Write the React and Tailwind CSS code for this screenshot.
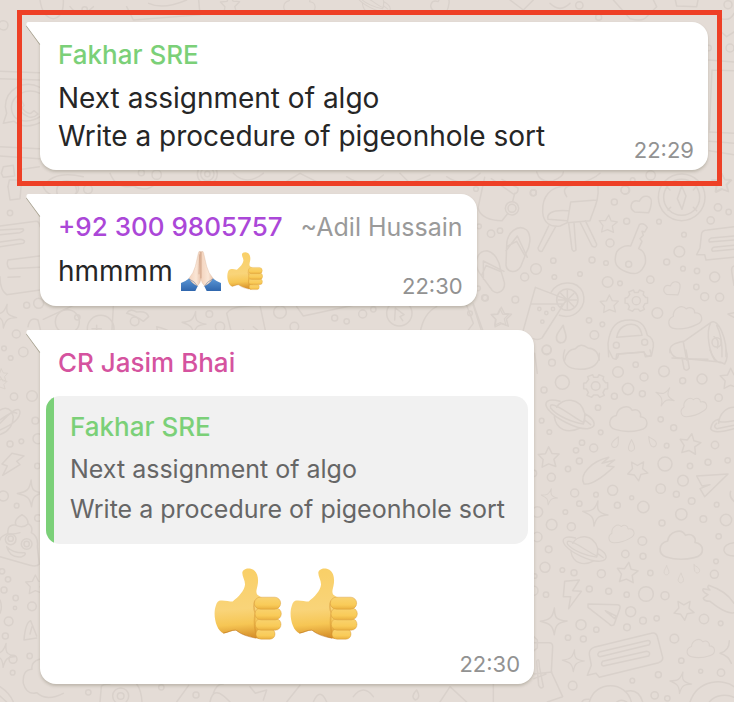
const T = 1 / 3;

const STAR = "M0 -32L10 -12L32 -10L16 6L22 28L0 20L-20 30L-17 7L-32 -9L-10 -11Z";
const SPARK = "M0 -40C2 -12 6 -4 40 -3C12 4 6 10 4 40C-2 14 -8 8 -40 2C-12 -4 -4 -10 0 -40Z";
const CLOUD = "M-44 34C-68 26 -66 -4 -40 -10C-36 -36 -2 -48 10 -26C28 -34 40 -18 36 -6C62 -4 66 30 34 36C10 42 -20 42 -44 34Z";
const HEART = "M22 26L-20 24C-40 10 -30 -16 -6 -8C4 -32 34 -26 30 -2Q28 14 22 26Z";
const DROP = "M0 -24C-10 -4 -18 6 -12 18C-6 28 10 26 12 12C14 0 4 -10 0 -24Z";
const GEAR =
  "M-9 -34L-6 -26L6 -26L10 -34L24 -28L22 -19L30 -10L36 -10L36 8L27 10L22 20L26 28L12 34L6 27L-6 27L-12 34L-26 28L-22 19L-28 9L-36 8L-36 -8L-28 -10L-21 -20L-24 -28Z M-13 0a13 13 0 1 0 26 0a13 13 0 1 0 -26 0";
const PLANET =
  "M-40 -24C-24 -54 30 -56 44 -6L44 18 M-47 4C-42 44 -6 56 30 38 M-30 -42C-70 -54 -80 -38 -66 -18C-44 10 20 42 52 40C82 38 78 14 46 -4 M-54 -32C-30 -30 10 8 42 22 M46 -4L40 26C10 22 -40 2 -58 -22Q-60 -32 -54 -32 M44 14L62 28";
const BOLT = "M0 -38L44 -42L24 -10L50 -8L12 44L18 8L-4 8Z";
const PLANE = "M-50 -30L44 -36L-26 32L-40 8L-10 -4L-34 0Z";
const MESSAGE =
  "M-110 8Q-112 -8 -96 -14L76 -56Q90 -60 94 -46L110 16Q112 26 98 32L-80 76L-90 64L-116 70L-104 40Z M-78 14L70 -22Q78 -36 62 -34L-80 0Q-90 10 -78 14 M-68 42L68 12Q76 0 62 -2L-70 28Q-78 38 -68 42";
const FLIPFLOP =
  "M-34 -6C-34 -44 0 -72 26 -52C42 -34 36 -2 24 18L8 58C-4 78 -32 78 -36 54Z M-36 10L-2 -34L28 30 M-34 -2L-4 -18L20 24";
const COMET = "M-44 40C-60 10 -20 -28 30 -40L10 -22L48 -32L24 -14L46 -12C26 6 -14 44 -44 40Z";

function Doodle({ d, x, y, r = 0, s = 1 }) {
  return <path d={d} transform={`translate(${x} ${y}) rotate(${r}) scale(${s})`} />;
}

function Dots({ list }) {
  return list.map(([x, y, r], i) => <circle key={i} cx={x} cy={y} r={r} />);
}

function Wallpaper() {
  return (
    <svg
      aria-hidden="true"
      className="pointer-events-none absolute left-0 top-0"
      width="734"
      height="702"
      viewBox="0 0 734 702"
      fill="none"
      stroke="#d9d1cb"
      strokeWidth="4.5"
      strokeLinejoin="round"
      strokeLinecap="round"
    >
      <g transform={`translate(470 180) scale(${T})`}>
        <Dots list={[[18,27,7],[190,38,9],[126,85,20],[126,85,12],[465,30,12],[433,66,9],[470,124,9],[567,125,7],[420,189,12],[476,253,9],[366,240,9],[408,249,7],[250,242,8],[198,267,16],[164,291,12],[253,291,7],[330,282,7],[413,306,16],[450,310,7],[541,299,11],[590,246,9],[628,215,16],[642,164,7],[722,121,11],[744,82,11],[776,96,8],[639,266,7],[681,273,8],[734,291,15],[679,321,8],[704,350,12],[749,352,12],[562,399,16],[357,421,8],[397,433,7],[373,465,13],[136,359,10],[44,353,9],[24,325,7],[63,161,11],[90,152,8],[27,139,7],[230,509,13],[0,400,7],[635,52,70],[635,52,54],[439,496,9],[524,487,9],[208,387,5],[249,387,5],[229,399,5],[217,425,5],[292,359,32],[740,487,14]]} />
        <path d="M635 18L648 48L636 88L622 56Z M590 20L600 30M680 18L670 30M594 90L602 82M680 92L670 82" />
        <path d="M44 -8L24 84C30 110 60 122 96 122L112 102 M64 -4L130 42Q146 40 144 24L96 -2 M134 40L128 64" />
        <path d="M290 18C240 18 216 50 218 96C220 128 240 142 270 138L292 128L360 122C372 84 388 60 384 20 M292 128L302 66L380 60 M294 92C240 88 230 104 234 118L292 122 M236 138L204 204Q206 216 216 214L258 138 M296 130L306 208Q310 218 318 210L312 128 M330 126L366 198Q380 206 380 192L346 122" />
        <path d="M482 198L508 134Q520 126 532 142L524 156L516 154L520 166L510 176L516 184L506 206Q530 216 526 250C514 282 496 286 470 276C436 264 430 246 440 216Q456 194 482 198Z" />
        <path d="M160 450L196 322L290 358L216 474Q204 482 190 476 M182 372L282 372 M244 336C262 304 318 296 338 336C354 380 314 420 268 406 M292 330V388M264 360H320M272 340L312 380M312 340L272 380" />
        <path d="M416 530L414 490C420 440 440 418 484 420C516 422 526 440 532 466Q552 474 550 500L544 528L526 530L522 516L440 522L438 538 M440 472C446 440 470 430 494 434Q512 440 516 466Z" />
        <path d="M600 518C596 496 612 490 642 484L722 428 M606 534L644 536L714 538 M640 486L650 540 M722 428C744 410 772 480 768 530 M722 428C706 460 720 520 734 540 M740 436Q758 470 756 530 M732 470Q750 480 742 504" />
        <path d="M792 140L712 150Q694 150 694 166L690 204L680 224L704 224L708 240L792 232 M792 168L724 174Q714 178 718 186L792 180 M792 196L730 202Q722 208 728 214L792 208 M792 258Q782 260 786 280L792 316 M774 402L792 398M776 404L792 412" />
        <path d="M284 540Q290 508 316 506Q332 486 354 504Q384 506 388 540 M10 372L38 450" />
        <Doodle d={STAR} x="414" y="132" s="0.85" r="5" />
        <Doodle d={STAR} x="418" y="372" s="0.85" />
        <Doodle d={STAR} x="94" y="412" s="0.95" />
        <Doodle d={STAR} x="756" y="10" s="0.9" />
        <Doodle d={HEART} x="514" y="72" s="1" />
        <Doodle d={HEART} x="606" y="324" s="0.8" />
        <Doodle d={GEAR} x="499" y="362" s="0.94" />
        <Doodle d={CLOUD} x="645" y="410" s="0.85" r="-12" />
        <Doodle d={DROP} x="276" y="462" s="1.1" r="8" />
        <Doodle d={FLIPFLOP} x="144" y="202" />
        <Doodle d={FLIPFLOP} x="62" y="268" s="0.98" r="-38" />
      </g>

      <g transform={`translate(530 350) scale(${T})`}>
        <Dots list={[[66,38,10],[97,97,21],[42,120,9],[264,66,16],[317,44,8],[342,81,12],[294,117,17],[253,139,9],[337,131,9],[204,173,8],[402,64,16],[458,92,9],[516,87,15],[566,143,11],[431,233,9],[392,208,8],[35,212,7],[58,246,7],[212,247,7],[156,278,8],[191,294,12],[138,301,8],[148,333,9],[114,357,8],[64,382,12],[134,429,12],[248,421,15],[198,434,7],[148,461,8],[106,486,7],[65,524,16],[124,530,12],[22,486,16],[262,466,9],[305,443,6],[340,471,17],[405,342,21],[480,348,8],[534,337,9],[593,331,8],[555,285,11],[410,287,7],[459,392,16],[392,416,14],[439,433,9],[485,453,10],[560,464,7],[454,493,17],[520,507,10],[588,510,17],[396,519,9],[10,370,10],[50,0,14]]} />
        <path d="M104 0C92 34 108 58 150 58C190 58 210 40 208 10 M236 0L248 24Q262 34 266 12L342 6Q350 26 364 14L360 0 M420 0Q428 24 446 24L570 36L584 42Q596 22 588 0 M456 24L462 56Q470 66 478 54L468 0 M540 0Q556 40 574 38" />
        <Doodle d={GEAR} x="197" y="108" />
        <Doodle d={PLANET} x="120" y="196" />
        <Doodle d={CLOUD} x="297" y="206" s="0.95" />
        <Doodle d={CLOUD} x="490" y="168" s="0.68" r="-20" />
        <Doodle d={SPARK} x="405" y="140" s="0.75" r="28" />
        <Doodle d={STAR} x="56" y="322" s="0.98" />
        <Doodle d={STAR} x="480" y="282" s="0.98" r="10" />
        <Doodle d={STAR} x="324" y="360" s="0.92" r="35" />
        <Doodle d={STAR} x="602" y="86" s="0.98" />
        <Doodle d={DROP} x="258" y="276" s="0.72" r="25" />
        <Doodle d={DROP} x="305" y="286" s="0.72" />
        <Doodle d={DROP} x="366" y="274" s="0.72" r="-35" />
        <Doodle d={COMET} x="206" y="362" />
        <Doodle d={SPARK} x="58" y="440" s="0.62" r="14" />
        <Doodle d={PLANE} x="550" y="408" />
        <path d="M612 172C590 172 568 190 566 220 M612 212Q560 222 566 208Q546 212 542 236Q550 254 612 236 M612 226L560 236Q548 230 560 220 M602 424Q596 440 612 454 M10 250V260M14 10L22 70" />
      </g>

      <g transform={`translate(530 520) scale(${T})`}>
        <Dots list={[[337,63,13],[286,102,11],[339,109,9],[22,51,14],[56,88,10],[45,142,15],[97,150,7],[132,158,9],[214,161,12],[178,207,9],[236,214,9],[290,224,8],[348,222,22],[361,159,8],[405,227,12],[302,275,15],[339,302,10],[380,295,8],[291,322,10],[153,314,15],[199,329,8],[114,353,8],[160,357,9],[48,224,8],[10,212,14],[553,163,12],[558,124,7],[566,49,8],[522,297,14],[572,310,7],[433,356,13],[454,422,8],[512,454,6],[573,458,11],[385,464,9],[307,482,7],[128,497,13],[374,526,11],[412,535,8],[14,168,7]]} />
        <Doodle d={PLANET} x="164" y="90" s="0.88" r="-2" />
        <Doodle d={SPARK} x="196" y="-20" s="0.95" r="12" />
        <Doodle d={CLOUD} x="273" y="38" s="0.66" r="-18" />
        <Doodle d={CLOUD} x="456" y="74" s="1.08" />
        <Doodle d={CLOUD} x="513" y="384" s="0.7" r="-5" />
        <Doodle d={STAR} x="292" y="158" s="0.98" r="8" />
        <Doodle d={STAR} x="463" y="268" s="0.92" r="36" />
        <Doodle d={DROP} x="410" y="151" s="0.56" />
        <Doodle d={DROP} x="453" y="174" s="0.6" />
        <Doodle d={DROP} x="499" y="146" s="0.56" r="-30" />
        <Doodle d={BOLT} x="104" y="222" />
        <Doodle d={SPARK} x="71" y="304" r="3" />
        <Doodle d={SPARK} x="130" y="422" s="0.82" r="6" />
        <Doodle d={SPARK} x="452" y="488" s="0.82" r="12" />
        <path d="M174 252L264 254Q274 256 268 270L252 314Q244 320 238 312L174 262Z M226 272L258 288L254 296L228 274" />
        <Doodle d={MESSAGE} x="288" y="396" />
        <path d="M612 250Q590 214 536 196Q530 202 540 210L520 206Q514 214 534 224L520 234Q522 244 540 244Q590 284 612 278 M612 68Q580 72 582 92Q586 108 612 108 M598 362Q598 392 570 400Q596 408 604 430" />
        <path d="M12 368H58Q68 368 68 380L64 456L98 530L52 546 M12 350L22 360V384L12 392 M66 456L12 462 M20 424Q28 410 28 440L40 500Q34 510 26 496Z M12 476L48 462" />
        <path d="M178 546C196 480 288 482 304 546 M288 514Q326 504 338 546 M156 546Q160 536 176 538 M260 546Q274 536 290 546 M480 546C504 476 584 476 612 500 M538 546C556 522 592 522 612 532" />
      </g>

      <g transform={`scale(${T})`}>
        <Dots list={[[10,76,14],[424,518,9],[470,524,14],[622,522,30],[622,522,20],[622,522,8],[200,572,30],[254,28,8]]} />
        <path d="M0 214L118 218 M0 236L118 240 M0 440L118 446 M0 468L118 476 M4 520L10 500L40 496L44 528L10 532Z M66 508L118 500 M24 560L28 540L60 540 M120 262C70 236 16 270 16 320L20 340L10 370L42 364Q76 390 120 368 M120 280C80 262 36 284 34 322Q36 360 70 362Q96 366 120 350 M52 306Q54 290 64 300L72 316L66 324Q80 342 92 340L102 332L114 342Q100 356 84 350Q54 336 52 306" />
        <path d="M120 0Q128 54 160 56Q192 50 190 0 M210 20Q240 60 280 20 M380 20L400 60L600 44L596 0 M446 10Q490 30 560 0 M330 520Q350 570 400 558Q440 580 470 548 M130 560Q160 510 250 530 M700 520Q740 560 790 520 M840 556L900 520L960 550 M1040 530Q1100 570 1150 525 M1200 520L1230 550L1290 525 M1340 530Q1390 565 1440 520" />
        <Doodle d={STAR} x="690" y="14" s="0.9" />
        <Doodle d={CLOUD} x="900" y="10" s="0.8" />
        <Doodle d={PLANET} x="1120" y="8" s="0.7" />
        <Doodle d={HEART} x="1320" y="12" s="0.9" />
      </g>

      <g transform={`translate(0 180) scale(${T})`}>
        <Dots list={[[30,99,8],[264,28,13],[80,376,9],[116,370,15],[49,462,12],[12,505,7],[70,516,14],[32,534,7],[628,402,10],[202,425,36],[232,412,8],[302,446,40],[404,424,13],[840,396,19],[660,440,14],[1004,414,9],[1040,424,8],[1088,402,12],[1120,388,8],[1198,400,38],[1456,354,9],[883,440,13]]} />
        <path d="M0 138L108 124Q118 124 120 140 M0 164L60 158Q76 152 68 146L0 150 M0 200L70 190Q80 180 60 178L0 186 M24 240L118 228 M28 266L118 262 M24 240Q18 256 28 266 M24 292L60 290 M0 290Q0 330 20 344L120 330 M24 20L30 60L60 56L64 10 M130 20Q140 50 200 54Q250 40 230 10" />
        <path d="M84 440Q90 408 114 420L126 470 M130 418L220 376 M340 380L336 450 M290 436V454M276 446H304M380 400Q390 384 410 396Q440 392 446 410L430 424Q400 404 380 400 M470 440Q520 450 524 480 M470 440L478 480 M680 400L700 480 M680 400Q690 384 720 380L780 376L800 470 M730 450L720 466M760 440L784 460 M890 380L910 408L1060 376 M1184 420L1186 384L1212 404L1200 410L1208 422 M1260 460Q1270 400 1310 380 M1400 376L1420 430L1390 470 M1420 376L1450 470" />
        <Doodle d={SPARK} x="14" y="408" s="0.9" r="12" />
        <Doodle d={SPARK} x="582" y="430" s="0.9" r="8" />
        <Doodle d={STAR} x="4" y="586" s="0.6" />
        <Doodle d={STAR} x="1500" y="412" s="0.8" />
      </g>

      <g transform={`translate(0 380) scale(${T})`}>
        <Dots list={[[42,50,11],[96,48,16],[106,122,10],[114,176,15],[30,192,9],[64,184,7],[112,258,8],[10,348,15],[50,377,7],[32,478,16],[32,476,8],[80,492,16],[80,492,8],[6,574,8],[24,598,8],[12,630,9],[47,654,8],[45,684,5],[96,679,13],[26,724,13],[16,768,9],[89,828,8],[39,838,12],[38,878,7],[265,937,8],[362,948,24],[362,948,10],[484,922,8],[588,945,9],[114,414,10]]} />
        <path d="M0 90Q20 78 34 94L40 110Q38 150 0 164 M0 130Q56 70 60 96Q60 124 0 150 M0 120Q40 90 50 100 M36 220L72 228L50 244L60 254L8 286L22 258L6 252Z" />
        <path d="M66 404Q40 420 48 434Q20 434 24 460Q0 470 0 480 M66 404Q84 414 84 430Q100 440 94 458Q116 470 112 500L118 552Q110 562 90 556L0 530 M48 436Q70 446 84 432 M28 462Q50 462 60 458 M20 500Q30 536 66 530Q80 524 74 518Q40 520 20 500Z" />
        <path d="M0 660Q8 680 0 700 M110 768L92 722Q76 728 72 780L110 774 M96 740L90 762 M0 920Q30 940 40 966 M0 948L20 966 M70 910Q66 870 96 868Q92 846 118 838 M70 910Q80 946 110 938Q140 966 190 940 M300 966L304 920Q306 912 330 912 M410 912Q424 930 426 966 M530 966L566 916 M640 940Q650 910 670 912 M630 966Q640 910 690 966" />
        <path d="M750 920L766 940L800 930L790 960 M860 966L900 916 M940 966Q960 920 980 966 M1060 950Q1090 910 1120 950 M1250 930Q1230 950 1246 960Q1264 954 1250 930Z M1320 966L1350 920L1400 966 M1480 912V966" />
        <Doodle d={SPARK} x="92" y="340" s="1" r="2" />
        <Doodle d={SPARK} x="12" y="826" s="0.9" r="10" />
        <Doodle d={STAR} x="106" y="614" s="0.9" />
        <Doodle d={STAR} x="2" y="10" s="0.6" />
      </g>

      <g transform={`translate(500 0) scale(${T})`}>
        <Dots list={[[238,16,11],[296,52,9],[684,14,12],[690,144,12],[626,144,8],[100,578,9],[376,570,13],[452,526,14],[398,540,7]]} />
        <path d="M340 0L390 56Q430 66 440 50L470 20L460 0 M526 0L530 18L590 20L594 0 M664 56Q690 64 702 40 M664 96L680 110L702 96 M626 180L702 186 M636 210L702 212 M636 210L628 390 M628 396L702 400 M628 424L702 430 M628 452L702 464 M110 516Q120 550 160 542Q190 530 190 516 M200 590Q180 560 220 556Q280 540 300 520" />
        <Doodle d={STAR} x="664" y="548" s="0.9" />
        <path d="M30 0L70 30L100 0 M150 10Q180 40 210 10" />
      </g>
    </svg>
  );
}

function EmojiDefs() {
  return (
    <svg aria-hidden="true" className="absolute h-0 w-0">
      <defs>
        <linearGradient id="hand" x1="0" y1="0" x2="0.05" y2="1">
          <stop offset="0" stopColor="#f9cf66" />
          <stop offset="0.6" stopColor="#f9d479" />
          <stop offset="0.82" stopColor="#f6c654" />
          <stop offset="1" stopColor="#d8922c" />
        </linearGradient>
        <linearGradient id="finger" x1="0" y1="0" x2="0" y2="1">
          <stop offset="0" stopColor="#f9d370" />
          <stop offset="0.65" stopColor="#f9cb58" />
          <stop offset="1" stopColor="#eab040" />
        </linearGradient>
        <linearGradient id="palm" x1="0" y1="0" x2="1" y2="0">
          <stop offset="0" stopColor="#f3d3bd" />
          <stop offset="0.6" stopColor="#fae6d6" />
          <stop offset="1" stopColor="#e9c4ab" />
        </linearGradient>
        <linearGradient id="cuff" x1="0" y1="0" x2="0" y2="1">
          <stop offset="0" stopColor="#5b97d6" />
          <stop offset="1" stopColor="#2f66ad" />
        </linearGradient>
      </defs>
    </svg>
  );
}

function ThumbsUp({ className }) {
  return (
    <svg role="img" aria-label="Thumbs up" className={className} viewBox="42 56 204 215">
      <path
        fill="url(#hand)"
        d="M62 153C74 152 88 156 98 156C116 142 133 124 135 106C136 92 126 82 127 69C128 58 146 52 160 61C174 70 176 90 173 106C171 118 166 128 172 136L188 146L190 262L176 268C152 262 124 256 108 242C94 242 84 250 71 252C48 244 38 196 47 170C50 158 56 153 62 153Z"
      />
      <path
        fill="none"
        stroke="#b56c1a"
        strokeOpacity="0.5"
        strokeWidth="3"
        d="M70 251C84 249 94 241 108 242C124 256 146 262 168 266"
      />
      <path fill="none" stroke="#d08a28" strokeOpacity="0.4" strokeWidth="5" d="M165 154Q158 172 166 190Q160 222 168 252" />
      <g fill="url(#finger)" stroke="#d39434" strokeOpacity="0.6" strokeWidth="2">
        <rect x="168" y="238" width="57" height="31" rx="15" />
        <rect x="166" y="207" width="77" height="35" rx="17" />
        <rect x="165" y="175" width="79" height="36" rx="18" />
        <rect x="163" y="143" width="79" height="36" rx="18" />
      </g>
    </svg>
  );
}

function FoldedHands({ className }) {
  return (
    <svg role="img" aria-label="Folded hands" className={className} viewBox="45 30 120 120">
      <path fill="url(#cuff)" d="M45 126Q58 122 70 112Q88 122 95 136L88 150H45Z" />
      <path fill="url(#cuff)" d="M165 126Q152 122 140 112Q122 122 115 136L122 150H165Z" />
      <path
        fill="url(#palm)"
        stroke="#d9b096"
        strokeWidth="1"
        d="M105 32Q98 28 97 37L88 76Q83 96 69 112Q78 128 94 135Q104 126 105 112Z"
      />
      <path
        fill="url(#palm)"
        stroke="#d9b096"
        strokeWidth="1"
        d="M105 32Q112 28 113 37L122 76Q127 96 141 112Q132 128 116 135Q106 126 105 112Z"
      />
      <path fill="none" stroke="#b98468" strokeWidth="2" d="M105 33V112M101 40L99 100" strokeOpacity="0.7" />
      <path fill="none" stroke="#2a5590" strokeOpacity="0.6" strokeWidth="2" d="M68 113Q88 122 95 136M142 113Q122 122 115 136" />
    </svg>
  );
}

function Bubble({ className = "", children }) {
  return (
    <article
      className={`relative rounded-2xl rounded-tl-none bg-white shadow-[0_2px_3px_rgba(80,75,50,0.25)] ${className}`}
    >
      <svg aria-hidden="true" className="absolute -left-3.5 top-0 h-6 w-4" viewBox="0 0 16 24">
        <path d="M0.5 4L14 22.5" stroke="#a9a493" strokeWidth="1.2" />
        <path d="M2 0H16V24H14.500V22.500L0.800 4Q-0.500 1 2 0Z" fill="#fff" />
      </svg>
      {children}
    </article>
  );
}

function Time({ children }) {
  return <time className="text-[22px] leading-6 text-[#929292]">{children}</time>;
}

const NAME = "text-[26px] font-medium leading-[38px]";

export default function App() {
  return (
    <main className="relative min-h-screen overflow-hidden bg-[#e4dcd6] pb-4 pl-[17px] pr-3 pt-2.5 font-['Inter','Liberation_Sans',sans-serif] text-[#262626]">
      <Wallpaper />
      <EmojiDefs />
      <div className="relative flex flex-col items-start">
        <div className="w-full border-[5px] border-[#ee4026] pb-[11px] pl-[18px] pr-[9px] pt-[7px]">
          <Bubble className="pb-2 pl-[18px] pr-3.5 pt-3.5">
            <h2 className={`${NAME} text-[#7bd078]`}>Fakhar SRE</h2>
            <div className="mt-[5px] flex items-end justify-between">
              <p className="pb-[7px] text-[28px] leading-[38px]">
                Next assignment of algo
                <br />
                Write a procedure of pigeonhole sort
              </p>
              <Time>22:29</Time>
            </div>
          </Bubble>
        </div>

        <Bubble className="ml-[23px] mt-2 pb-2 pl-[18px] pr-3.5 pt-3.5">
          <div className="flex items-center gap-[18px]">
            <h2 className={`${NAME} text-[#ab47d8]`}>+92 300 9805757</h2>
            <span className="text-[25px] leading-[38px] text-[#9a9a9a]">~Adil Hussain</span>
          </div>
          <div className="mt-[5px] flex items-end justify-between">
            <p className="flex items-center pb-[7px] text-[28px] leading-[38px]">
              hmmmm
              <FoldedHands className="ml-2 size-10" />
              <ThumbsUp className="ml-1.5 h-10 w-9" />
            </p>
            <Time>22:30</Time>
          </div>
        </Bubble>

        <Bubble className="ml-[23px] mt-6 flex flex-col px-1.5 pb-2 pt-3.5">
          <h2 className={`${NAME} pl-3 text-[#d5539f]`}>CR Jasim Bhai</h2>
          <div className="mt-3.5 flex overflow-hidden rounded-[14px] bg-[#f1f1f1]">
            <div className="w-2 bg-[#7bd078]" />
            <blockquote className="pb-[15px] pl-4 pr-[23px] pt-3">
              <h3 className={`${NAME} text-[#7bd078]`}>Fakhar SRE</h3>
              <p className="mt-[3px] text-[25px] leading-10 text-[#666666]">
                Next assignment of algo
                <br />
                Write a procedure of pigeonhole sort
              </p>
            </blockquote>
          </div>
          <div className="mt-6 flex justify-center gap-2 pr-0.5">
            <ThumbsUp className="h-[72px] w-[68px]" />
            <ThumbsUp className="h-[72px] w-[68px]" />
          </div>
          <div className="mt-3 flex justify-end pr-2">
            <Time>22:30</Time>
          </div>
        </Bubble>
      </div>
    </main>
  );
}
